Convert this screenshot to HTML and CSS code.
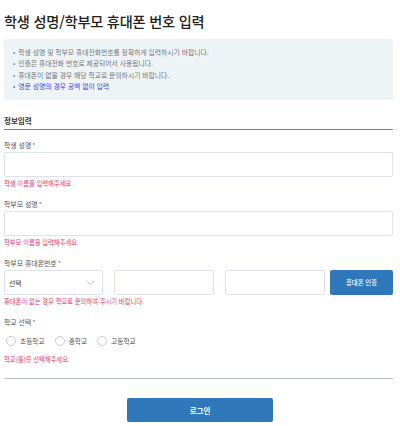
FILE: index.html
```html
<!DOCTYPE html>
<html lang="ko">
<head>
<meta charset="utf-8">
<link rel="stylesheet" href="styles.css">
</head>
<body>
<div class="page">
  <h1 class="title">학생 성명/학부모 휴대폰 번호 입력</h1>
  <ul class="notice">
    <li>학생 성명 및 학부모 휴대전화번호를 정확하게 입력하시기 바랍니다.</li>
    <li>인증은 휴대전화 번호로 제공되어서 사용됩니다.</li>
    <li>휴대폰이 없을 경우 해당 학교로 문의하시기 바랍니다.</li>
    <li class="hl">영문 성명의 경우 공백 없이 입력</li>
  </ul>
  <h2 class="section">정보입력</h2>
  <div class="field">
    <div class="label">학생 성명<span class="req">*</span></div>
    <input class="input" type="text">
    <div class="err">학생 이름을 입력해주세요.</div>
  </div>
  <div class="field">
    <div class="label">학부모 성명<span class="req">*</span></div>
    <input class="input" type="text">
    <div class="err">학부모 이름을 입력해주세요.</div>
  </div>
  <div class="field">
    <div class="label">학부모 휴대폰번호<span class="req">*</span></div>
    <div class="phone">
      <div class="select">
        <span>선택</span>
        <svg class="chev" width="9" height="5" viewBox="0 0 9 5"><path d="M0.5 0.5 L4.5 4.5 L8.5 0.5" fill="none" stroke="#b9bfc6" stroke-width="0.8"/></svg>
      </div>
      <span class="dash">-</span>
      <input class="input" type="text">
      <span class="dash">-</span>
      <input class="input" type="text">
      <button class="btn-auth">휴대폰 인증</button>
    </div>
    <div class="err">휴대폰이 없는 경우 학교로 문의하여 주시기 바랍니다.</div>
  </div>
  <div class="field">
    <div class="label">학교 선택<span class="req">*</span></div>
    <div class="radios">
      <label class="radio"><span class="circle"></span>초등학교</label>
      <label class="radio"><span class="circle"></span>중학교</label>
      <label class="radio"><span class="circle"></span>고등학교</label>
    </div>
    <div class="err err-radio">학교(을)를 선택해주세요.</div>
  </div>
  <hr class="divider">
  <div class="actions">
    <button class="btn-login">로그인</button>
  </div>
</div>
</body>
</html>
```
FILE: styles.css
```css
* { box-sizing: border-box; }
body {
  margin: 0;
  font-family: "Noto Sans CJK KR", "Noto Sans", sans-serif;
  color: #333;
  background: #fff;
}
.page {
  width: 389px;
  margin-left: 4px;
  padding-top: 10px;
}
.title {
  margin: 0;
  font-size: 14.2px;
  line-height: 22px;
  font-weight: 500;
  color: #222;
  letter-spacing: -0.2px;
}
.notice {
  list-style: none;
  margin: 7px 0 0;
  padding: 8px 8px 8px 9px;
  background: #eef3f6;
  border-radius: 2px;
  height: 61px;
}
.notice li {
  font-size: 6.8px;
  line-height: 11.3px;
  color: #777;
}
.notice li::before {
  content: "•";
  margin-right: 3px;
}
.notice li.hl { color: #4b3df0; }
.section {
  margin: 15px 0 0;
  font-size: 7.5px;
  line-height: 12px;
  font-weight: 700;
  color: #333;
  padding-bottom: 2px;
  border-bottom: 1px solid #7d8288;
}
.field { margin-top: 10px; }
.label {
  font-size: 6.9px;
  line-height: 10px;
  color: #555;
  margin-bottom: 2px;
}
.req { color: #e8486a; margin-left: 1px; }
.input {
  display: block;
  width: 100%;
  min-width: 0;
  height: 25px;
  margin: 0;
  border: 1px solid #dfe3e8;
  border-radius: 2px;
  background: #fff;
  padding: 0 5px;
  font: inherit;
}
.err {
  margin-top: 2px;
  font-size: 6.3px;
  line-height: 10px;
  color: #e8386b;
}
.phone {
  display: grid;
  grid-template-columns: 99px 11px minmax(0, 1fr) 11px minmax(0, 1fr) 68px;
  align-items: center;
  height: 25px;
}
.phone .input { height: 25px; }
.select {
  height: 25px;
  border: 1px solid #dfe3e8;
  border-radius: 2px;
  display: flex;
  align-items: center;
  justify-content: space-between;
  padding: 0 7px 0 4px;
  font-size: 6.8px;
  color: #444;
}
.chev { display: block; }
.dash {
  text-align: center;
  font-size: 6px;
  color: #ccc;
}
.btn-auth {
  margin-left: 5px;
  width: 63px;
  height: 25px;
  border: 0;
  border-radius: 2px;
  background: #2f78b9;
  color: #fff;
  font: inherit;
  font-size: 6.4px;
  font-weight: 500;
  padding: 0;
}
.radios {
  display: flex;
  margin-top: 9px;
  height: 10px;
  align-items: center;
}
.radio {
  display: flex;
  align-items: center;
  font-size: 6.7px;
  color: #555;
  margin-right: 8px;
}
.circle {
  width: 10px;
  height: 10px;
  border: 1px solid #c9ced4;
  border-radius: 50%;
  margin: 0 4px 0 2px;
}
.err-radio { margin-top: 9px; }
.divider {
  margin: 13px 0 0;
  border: 0;
  border-top: 1px solid #b9c0c7;
}
.actions {
  display: flex;
  justify-content: center;
  margin-top: 19px;
}
.btn-login {
  width: 146px;
  height: 24px;
  border: 0;
  border-radius: 2px;
  background: #2f78b9;
  color: #fff;
  font: inherit;
  font-size: 7.5px;
  font-weight: 700;
  margin-left: 3px;
}
```
